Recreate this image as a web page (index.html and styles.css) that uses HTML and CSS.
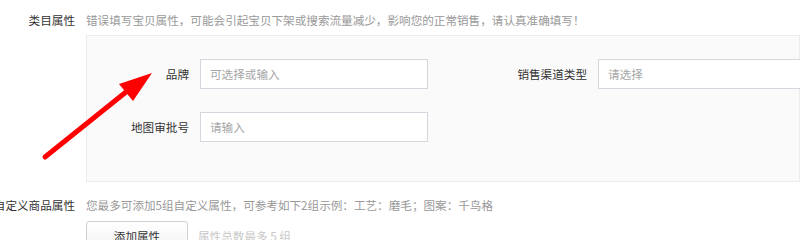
FILE: index.html
```html
<!DOCTYPE html>
<html lang="zh-CN">
<head>
<meta charset="utf-8">
<title>类目属性</title>
<link rel="stylesheet" href="styles.css">
</head>
<body>
<div class="page">
  <div class="row">
    <div class="label">类目属性</div>
    <div class="content">
      <div class="hint">错误填写宝贝属性，可能会引起宝贝下架或搜索流量减少，影响您的正常销售，请认真准确填写！</div>
      <div class="panel">
        <div class="fields">
          <div class="field">
            <div class="field-label">品牌</div>
            <div class="input">可选择或输入</div>
          </div>
          <div class="field">
            <div class="field-label">销售渠道类型</div>
            <div class="input">请选择</div>
          </div>
          <div class="field">
            <div class="field-label">地图审批号</div>
            <div class="input">请输入</div>
          </div>
        </div>
      </div>
    </div>
  </div>
  <div class="row row-custom">
    <div class="label">自定义商品属性</div>
    <div class="content">
      <div class="hint">您最多可添加5组自定义属性，可参考如下2组示例：工艺：磨毛；图案：千鸟格</div>
      <div class="actions">
        <button class="btn" type="button">添加属性</button>
        <span class="note">属性总数最多 5 组</span>
      </div>
    </div>
  </div>
  <svg class="arrow" width="800" height="240" viewBox="0 0 800 240" aria-hidden="true">
    <line x1="45" y1="157" x2="126" y2="92" stroke="#ff0000" stroke-width="5" stroke-linecap="round"/>
    <polygon points="152,73 119,84 133,101" fill="#ff0000"/>
  </svg>
</div>
</body>
</html>
```
FILE: styles.css
```css
html, body {
  margin: 0;
  padding: 0;
  background: #ffffff;
}
body {
  width: 800px;
  height: 240px;
  overflow: hidden;
  font-family: "Noto Sans CJK SC", "Noto Sans", sans-serif;
  font-size: 11.6px;
  color: #333333;
}
.page {
  position: relative;
  padding-top: 10px;
}
.row {
  display: grid;
  grid-template-columns: 75px 1fr;
  column-gap: 11px;
}
.label {
  display: flex;
  justify-content: flex-end;
  white-space: nowrap;
  line-height: 20px;
  color: #333333;
}
.content {
  min-width: 0;
}
.hint {
  line-height: 20px;
  color: #999999;
  white-space: nowrap;
}
.panel {
  margin-top: 5px;
  height: 122px;
  background: #fafafa;
  border: 1px solid #ececec;
  border-right-color: #ececec;
  padding-top: 23px;
  box-sizing: content-box;
}
.fields {
  display: grid;
  grid-template-columns: 398px 398px;
  row-gap: 23px;
}
.field {
  display: flex;
  align-items: center;
}
.field-label {
  width: 102px;
  flex: none;
  text-align: right;
  color: #333333;
}
.input {
  flex: none;
  margin-left: 11px;
  width: 228px;
  height: 30px;
  box-sizing: border-box;
  border: 1px solid #d6d6de;
  background: #ffffff;
  padding-left: 9px;
  line-height: 28px;
  color: #a6a6a6;
}
.row-custom {
  margin-top: 13px;
}
.actions {
  display: flex;
  align-items: center;
  margin-top: 6px;
}
.btn {
  width: 102px;
  height: 30px;
  box-sizing: border-box;
  border: 1px solid #cfcfd6;
  border-radius: 3px;
  background: linear-gradient(#ffffff, #f3f3f3);
  font-family: inherit;
  font-size: 11.6px;
  color: #333333;
  padding: 0;
}
.note {
  margin-left: 10px;
  color: #c8c8c8;
}
.arrow {
  position: absolute;
  left: 0;
  top: 0;
  pointer-events: none;
}
```
